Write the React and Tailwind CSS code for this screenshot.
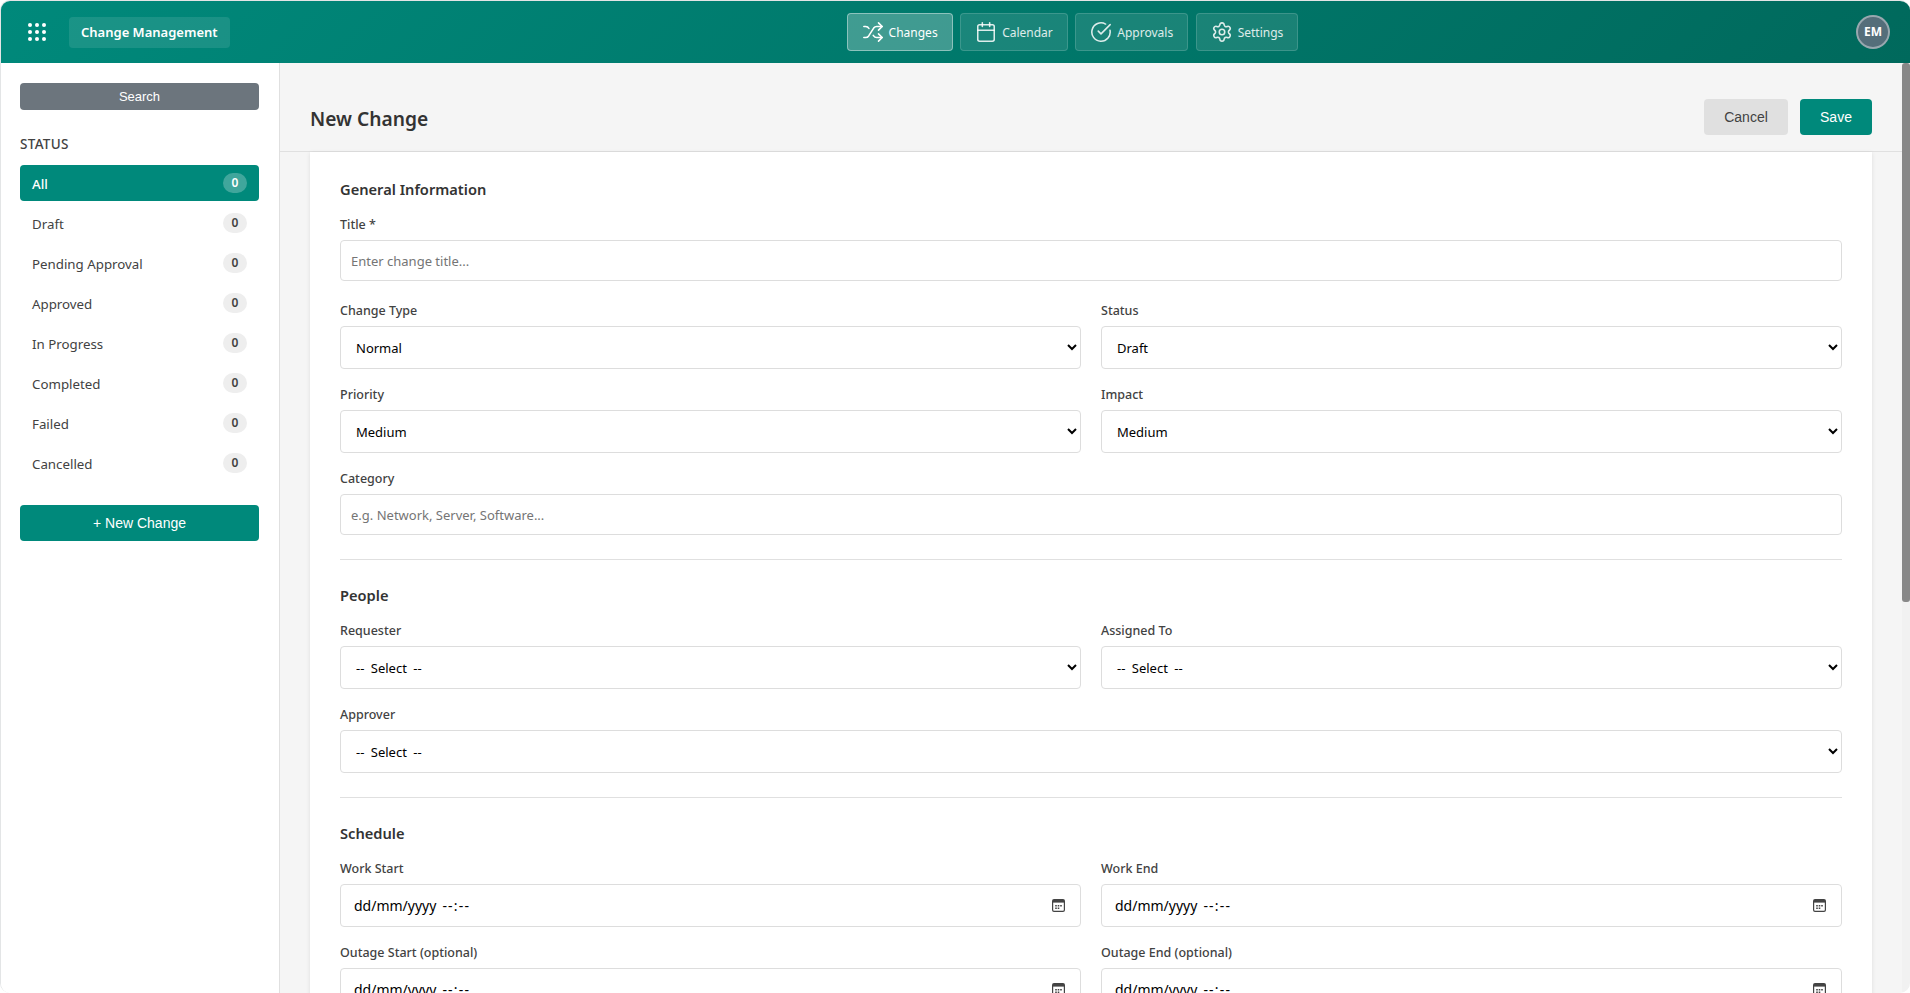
import React from "react";
import { Shuffle, Calendar, CircleCheckBig, Settings } from "lucide-react";

const nav = [
  { label: "Changes", Icon: Shuffle, active: true },
  { label: "Calendar", Icon: Calendar },
  { label: "Approvals", Icon: CircleCheckBig },
  { label: "Settings", Icon: Settings },
];
const statuses = ["All", "Draft", "Pending Approval", "Approved", "In Progress", "Completed", "Failed", "Cancelled"];

function GridIcon() {
  const dots = [];
  for (let y = 0; y < 3; y++) for (let x = 0; x < 3; x++) dots.push(<circle key={`${x}${y}`} cx={2 + x * 7} cy={2 + y * 7} r={2} fill="white" />);
  return <svg width="18" height="18" viewBox="0 0 18 18">{dots}</svg>;
}

function Label({ children }) {
  return <label className="block h-[16px] leading-[18px] text-[12.5px] font-medium text-[#424242] mb-[8px]">{children}</label>;
}
function TextField({ label, placeholder, last }) {
  return (
    <div className={last ? "mb-[17px]" : "mb-[21px]"}>
      <Label>{label}</Label>
      <input placeholder={placeholder} className="block w-full h-[41px] px-[10px] rounded-[4px] border border-[#dddddd] bg-white text-[13px] outline-none placeholder:text-[#757575]" />
    </div>
  );
}
function SelectField({ label, value }) {
  return (
    <div className="mb-[17px] min-w-0">
      <Label>{label}</Label>
      <select defaultValue={value} className="block w-full h-[43px] pl-[11px] pr-[8px] rounded-[4px] border border-[#dddddd] bg-white text-[13px] [word-spacing:3px] text-black outline-none">
        <option>{value}</option>
      </select>
    </div>
  );
}
function DateField({ label }) {
  return (
    <div className="mb-[17px] min-w-0">
      <Label>{label}</Label>
      <div className="flex items-center justify-between h-[43px] pl-[13px] pr-[15px] rounded-[4px] border border-[#dddddd] bg-white text-[14px] text-black">
        <span className="flex gap-[6px]">
          <span>dd/mm/yyyy</span>
          <span className="tracking-[1.2px]">--:--</span>
        </span>
        <svg width="13" height="13" viewBox="0 0 13 13" fill="none">
          <rect x="0.6" y="0.6" width="11.8" height="11.8" rx="1.4" stroke="#444" strokeWidth="1.2" />
          <rect x="1" y="1" width="11" height="2.6" fill="#444" />
          <path d="M3.2 6h1.6v1.4H3.2zM5.7 6h1.6v1.4H5.7zM8.2 6h1.6v1.4H8.2zM3.2 8.6h1.6V10H3.2zM5.7 8.6h1.6V10H5.7z" fill="#444" />
        </svg>
      </div>
    </div>
  );
}
function Heading({ children }) {
  return <h3 className="h-[22px] leading-[22px] text-[14.65px] font-semibold text-[#333333] mb-[16px]">{children}</h3>;
}

export default function App() {
  return (
    <div className="h-[993px] w-[1910px] flex flex-col overflow-hidden rounded-[10px] border-t border-l border-[#e3e5e6] bg-white font-['Noto_Sans','Open_Sans',sans-serif]">
      <header className="h-[62px] shrink-0 flex items-center pl-[27px] pr-[20px] bg-[linear-gradient(135deg,#00897b,#00695c)]">
        <div className="flex items-center gap-[23px]">
          <GridIcon />
          <div className="h-[31px] flex items-center px-[12px] pt-[2px] rounded-[4px] bg-white/10 text-[13px] font-semibold text-white">Change Management</div>
        </div>
        <nav className="ml-[617px] flex gap-[7.5px]">
          {nav.map(({ label, Icon, active }) => (
            <div key={label} className={active
              ? "h-[38px] flex items-center gap-[5px] px-[14px] rounded-[4px] border border-white/40 bg-white/25 text-[12px] text-white"
              : "h-[38px] flex items-center gap-[5px] px-[14px] rounded-[4px] border border-white/15 bg-white/10 text-[12px] text-white/85"}>
              <Icon size={22} strokeWidth={1.7} />
              <span className="pt-[2px]">{label}</span>
            </div>
          ))}
        </nav>
        <div className="ml-auto w-[34px] h-[34px] rounded-full border-2 border-white/40 bg-[#546e7a] flex items-center justify-center text-[12px] font-bold text-white">EM</div>
      </header>
      <div className="flex-1 flex min-h-0">
        <aside className="w-[279px] shrink-0 border-r border-[#e0e0e0] bg-white pl-[19px] pr-[20px] pt-[20px]">
          <button className="block w-full h-[27px] rounded-[4px] bg-[#6c757d] font-['Liberation_Sans',sans-serif] text-[13px] text-white">Search</button>
          <div className="mt-[24px] h-[20px] leading-[20px] text-[13.5px] tracking-[0.3px] font-medium text-[#424242]">STATUS</div>
          <ul className="mt-[11px] flex flex-col gap-[4px]">
            {statuses.map((s, i) => (
              <li key={s} className={i === 0
                ? "h-[36px] flex items-center justify-between pl-[12px] pr-[12px] rounded-[4px] bg-[#00897b] text-[13.3px] font-medium text-white"
                : "h-[36px] flex items-center justify-between pl-[12px] pr-[12px] rounded-[4px] text-[13.3px] text-[#424242]"}>
                <span className="pt-[4px]">{s}</span>
                <span className={i === 0
                  ? "w-[24px] h-[20px] rounded-full bg-white/25 flex items-center justify-center text-[12px] font-semibold text-white"
                  : "w-[24px] h-[20px] rounded-full bg-[#eeeeee] flex items-center justify-center text-[12px] font-semibold text-[#424242]"}>0</span>
              </li>
            ))}
          </ul>
          <button className="mt-[24px] block w-full h-[36px] rounded-[4px] bg-[#00897b] font-['Liberation_Sans',sans-serif] text-[14px] text-white">+ New Change</button>
        </aside>
        <main className="flex-1 min-w-0 overflow-hidden bg-[#f5f5f5]">
          <div className="h-[89px] flex items-end justify-between pl-[30px] pr-[30px] pb-[16px] border-b border-[#e0e0e0]">
            <h2 className="pb-[2px] text-[19.2px] leading-[28px] font-semibold text-[#333333]">New Change</h2>
            <div className="flex gap-[12px] font-['Liberation_Sans',sans-serif] text-[14px]">
              <button className="w-[84px] h-[36px] rounded-[4px] bg-[#e0e0e0] text-[#424242]">Cancel</button>
              <button className="w-[72px] h-[36px] rounded-[4px] bg-[#00897b] text-white">Save</button>
            </div>
          </div>
          <div className="mx-[30px] mb-[30px] h-[1423px] bg-white rounded-b-[4px] shadow-[0_1px_4px_rgba(0,0,0,0.1)] px-[30px] pt-[26px]">
            <Heading>General Information</Heading>
            <TextField label="Title *" placeholder="Enter change title..." />
            <div className="grid grid-cols-2 gap-x-[20px]">
              <SelectField label="Change Type" value="Normal" />
              <SelectField label="Status" value="Draft" />
              <SelectField label="Priority" value="Medium" />
              <SelectField label="Impact" value="Medium" />
            </div>
            <TextField label="Category" placeholder="e.g. Network, Server, Software..." last />
            <hr className="mt-[24px] mb-[24px] border-[#e0e0e0]" />
            <Heading>People</Heading>
            <div className="grid grid-cols-2 gap-x-[20px]">
              <SelectField label="Requester" value="-- Select --" />
              <SelectField label="Assigned To" value="-- Select --" />
            </div>
            <SelectField label="Approver" value="-- Select --" />
            <hr className="mt-[24px] mb-[24px] border-[#e0e0e0]" />
            <Heading>Schedule</Heading>
            <div className="grid grid-cols-2 gap-x-[20px]">
              <DateField label="Work Start" />
              <DateField label="Work End" />
              <DateField label="Outage Start (optional)" />
              <DateField label="Outage End (optional)" />
            </div>
          </div>
        </main>
        <div className="w-[8px] shrink-0 bg-[#f1f1f1]">
          <div className="h-[539px] rounded-[3px] bg-[#888888]" />
        </div>
      </div>
    </div>
  );
}
